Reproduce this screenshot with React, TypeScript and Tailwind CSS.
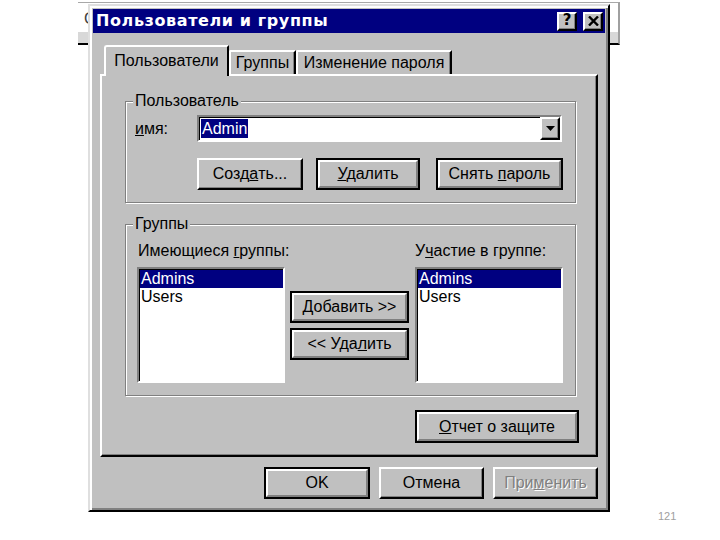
import type { ReactNode } from "react";

const raised =
  "border-2 border-t-white border-l-white border-r-black border-b-black shadow-[inset_-1px_-1px_0_#808080]";
const sunken =
  "border-2 border-t-[#808080] border-l-[#808080] border-r-white border-b-white shadow-[inset_1px_1px_0_#000]";
const etched =
  "border border-[#808080] shadow-[1px_1px_0_#fff,inset_1px_1px_0_#fff]";

type BtnProps = {
  children: ReactNode;
  className?: string;
  isDefault?: boolean;
  disabled?: boolean;
};

const Button = ({ children, className = "", isDefault, disabled }: BtnProps) => {
  if (isDefault) {
    return (
      <div className={`border-2 border-black ${className}`}>
        <div className="flex h-full items-center justify-center border-2 border-t-white border-l-white border-r-[#808080] border-b-[#808080]">
          {children}
        </div>
      </div>
    );
  }
  return (
    <div
      className={`flex items-center justify-center ${raised} ${className} ${
        disabled ? "text-[#808080] [text-shadow:1px_1px_0_#fff]" : ""
      }`}
    >
      {children}
    </div>
  );
};

const ListBox = () => (
  <div className={`h-[116px] w-[148px] bg-white ${sunken}`}>
    <div className="mt-[1px] ml-[1px] flex h-[18px] items-center bg-[#000080] px-[1px] leading-[18px] text-white">
      Admins
    </div>
    <div className="ml-[1px] flex h-[18px] items-center px-[1px] leading-[18px]">
      Users
    </div>
  </div>
);

const Tab = ({ label, active, className }: { label: string; active?: boolean; className: string }) => (
  <div
    className={
      active
        ? `relative z-10 -mb-[2px] h-[31px] rounded-tl-[3px] border-t-2 border-l-2 border-r-2 border-t-white border-l-white border-r-black bg-[#c0c0c0] pt-[5px] text-center leading-[18px] ${className}`
        : `h-[24px] rounded-tl-[2px] border-t-2 border-l-2 border-r-2 border-t-white border-l-white border-r-black pt-[2px] text-center leading-[18px] shadow-[inset_-1px_0_0_#808080] ${className}`
    }
  >
    {label}
  </div>
);

export default function App() {
  return (
    <div className="relative flex h-[540px] w-[720px] items-start overflow-hidden bg-white font-['Liberation_Sans',Arial,sans-serif] text-[16px] text-black">
      {/* window behind the dialog */}
      <div className="absolute left-[78px] top-[2px] flex h-[43px] w-[542px] flex-col border-t border-r-2 border-b-2 border-t-[#a8a8a8] border-r-[#a0a0a0] border-b-black">
        <div className="flex-1 pl-[6px] pt-[8px] leading-[16px] text-[#404040]">С</div>
        <div className="h-[11px] bg-[#d8d8d8]" />
      </div>

      {/* dialog */}
      <div className="relative z-10 ml-[88px] mt-[4px] flex w-[522px] flex-col border-2 border-t-[#dfdfdf] border-l-[#dfdfdf] border-r-black border-b-black bg-[#c0c0c0] p-[3px] shadow-[inset_2px_2px_0_#fff,inset_-2px_-2px_0_#808080]">
        {/* title bar */}
        <div className="flex h-[24px] items-center bg-[#000080] pl-[3px] pr-[2px]">
          <span className="font-['DejaVu_Sans',sans-serif] text-[16px] font-bold tracking-[0.6px] text-white">
            Пользователи и группы
          </span>
          <div className="ml-auto flex gap-[6px]">
            <div className={`flex h-[19px] w-[20px] items-center justify-center bg-[#c0c0c0] pb-[1px] ${raised} font-['DejaVu_Sans',sans-serif] text-[15px] leading-[15px] font-bold text-black`}>
              ?
            </div>
            <div className={`flex h-[19px] w-[20px] items-center justify-center bg-[#c0c0c0] ${raised}`}>
              <svg width="11" height="10" viewBox="0 0 11 10">
                <path d="M1 0.5 L10 9.5 M10 0.5 L1 9.5" stroke="#000" strokeWidth="2.4" />
              </svg>
            </div>
          </div>
        </div>

        {/* tabs */}
        <div className="mt-[12px] ml-[11px] flex items-end">
          <Tab label="Пользователи" active className="w-[125px]" />
          <Tab label="Группы" className="w-[67px]" />
          <Tab label="Изменение пароля" className="w-[156px]" />
        </div>

        {/* tab panel */}
        <div className="mx-[7px] flex w-[498px] flex-col border-2 border-t-white border-l-white border-r-black border-b-black pb-[12px] shadow-[inset_-1px_-1px_0_#808080]">
          <fieldset className={`mt-[16px] ml-[23px] w-[451px] ${etched} pb-[12px] pl-[9px]`}>
            <legend className="-ml-[2px] bg-[#c0c0c0] px-[2px] leading-[18px]">Пользователь</legend>
            <div className="mt-[5px] flex items-center">
              <div className="w-[62px] leading-[18px]">
                <u>и</u>мя:
              </div>
              <div className={`flex h-[27px] w-[365px] items-center bg-white ${sunken}`}>
                <span className="ml-[2px] bg-[#000080] px-[1px] leading-[19px] text-white">
                  Admin
                </span>
                <div className={`ml-auto flex h-[23px] w-[20px] items-center justify-center bg-[#c0c0c0] ${raised}`}>
                  <svg width="9" height="5" viewBox="0 0 9 5">
                    <path d="M0 0 H9 L4.5 5 Z" fill="#000" />
                  </svg>
                </div>
              </div>
            </div>
            <div className="mt-[16px] ml-[62px] flex">
              <Button className="h-[32px] w-[106px]">
                Созд<u>а</u>ть...
              </Button>
              <Button isDefault className="ml-[13px] h-[32px] w-[104px]">
                <span>
                  <u>У</u>далить
                </span>
              </Button>
              <Button isDefault className="ml-[16px] h-[32px] w-[127px]">
                <span>
                  Снять <u>п</u>ароль
                </span>
              </Button>
            </div>
          </fieldset>

          <fieldset className={`mt-[12px] ml-[23px] w-[451px] ${etched} pb-[12px] pl-[11px]`}>
            <legend className="-ml-[4px] bg-[#c0c0c0] px-[2px] leading-[18px]">Группы</legend>
            <div className="mt-[9px] flex">
              <div className="flex w-[148px] flex-col">
                <div className="whitespace-nowrap pl-[1px] leading-[18px]">
                  Имеющиеся <u>г</u>руппы:
                </div>
                <div className="mt-[7px]">
                  <ListBox />
                </div>
              </div>
              <div className="ml-[5px] flex w-[119px] flex-col gap-[5px] pt-[49px]">
                <Button isDefault className="h-[32px] w-[119px]">
                  <span>
                    <u>Д</u>обавить &gt;&gt;
                  </span>
                </Button>
                <Button isDefault className="h-[32px] w-[119px]">
                  <span>
                    &lt;&lt; Уда<u>л</u>ить
                  </span>
                </Button>
              </div>
              <div className="ml-[6px] flex w-[148px] flex-col">
                <div className="whitespace-nowrap leading-[18px]">
                  У<u>ч</u>астие в группе:
                </div>
                <div className="mt-[7px]">
                  <ListBox />
                </div>
              </div>
            </div>
          </fieldset>

          <div className="mt-[14px] mr-[17px] self-end">
            <Button isDefault className="h-[33px] w-[164px]">
              <span>
                <u>О</u>тчет о защите
              </span>
            </Button>
          </div>
        </div>

        {/* bottom buttons */}
        <div className="mt-[10px] mb-[8px] flex justify-end gap-[9px] pr-[7px]">
          <Button isDefault className="h-[32px] w-[106px]">
            OK
          </Button>
          <Button className="h-[32px] w-[105px]">Отмена</Button>
          <Button disabled className="h-[32px] w-[105px]">
            <span>
              При<u>м</u>енить
            </span>
          </Button>
        </div>
      </div>

      <div className="mb-[18px] ml-[48px] self-end text-[11px] leading-[12px] text-[#a0a0a0]">121</div>
    </div>
  );
}
